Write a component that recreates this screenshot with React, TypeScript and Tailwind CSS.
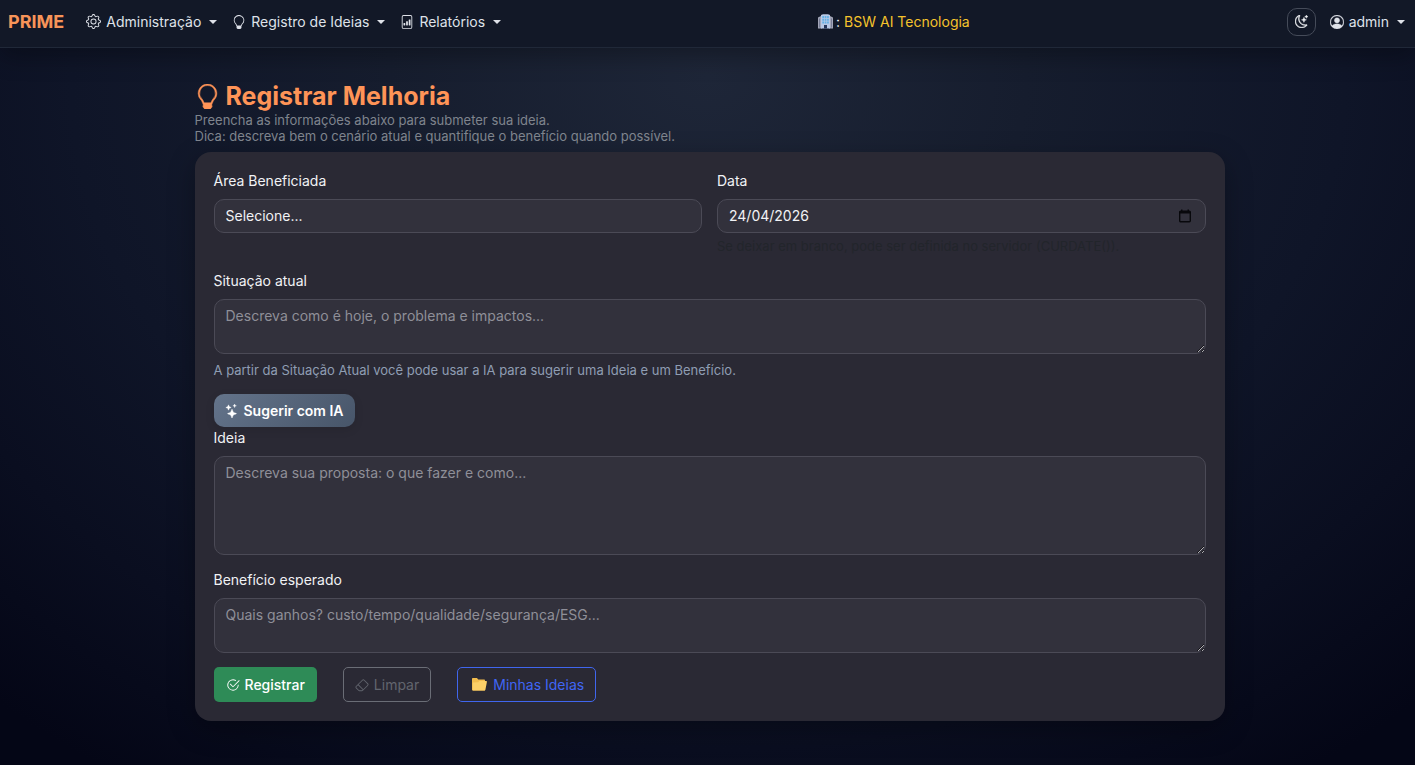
import { useState } from "react";
import type { ReactNode } from "react";
import {
  BsCheck2Circle,
  BsEraser,
  BsFileBarGraph,
  BsGear,
  BsLightbulb,
  BsMoonStars,
  BsPersonCircle,
  BsStars,
} from "react-icons/bs";

const fieldClass =
  "block w-full rounded-[10px] border border-[#4b4a56] bg-[#32313c] px-[11px] text-[14px] leading-[22px] text-[#f1f2f5] placeholder-[#8f8f98] outline-none focus:border-[#6b7a99]";
const labelClass = "mb-[7px] block text-[14px] leading-[22px] text-[#f1f2f5]";

function Caret() {
  return (
    <span className="ml-2 h-0 w-0 border-x-4 border-t-4 border-x-transparent border-t-current" />
  );
}

function NavItem({ icon, label }: { icon: ReactNode; label: string }) {
  return (
    <button type="button" className="flex items-center text-[14px] leading-[22px] text-[#dfe2e9]">
      {icon}
      <span className="ml-[5px]">{label}</span>
      <Caret />
    </button>
  );
}

function BuildingIcon() {
  return (
    <svg width="15" height="15" viewBox="0 0 15 15" aria-hidden="true">
      <path d="M0 3.500l4-2v13H0zM15 3.500l-4-2v13h4z" fill="#a3a6b8" />
      <path d="M3 1l2-.7h5l2 .7v13.500H3z" fill="#b9c9e6" />
      <path
        d="M4.300 2h1.700v2H4.300zM6.700 2h1.700v2H6.700zM9.100 2h1.700v2H9.100zM4.300 4.700h1.700v2H4.300zM6.700 4.700h1.700v2H6.700zM9.100 4.700h1.700v2H9.100zM4.300 7.400h1.700v2H4.300zM6.700 7.400h1.700v2H6.700zM9.100 7.400h1.700v2H9.100z"
        fill="#62b0e4"
      />
      <path d="M1 4.500h1v9H1zM13 4.500h1v9h-1z" fill="#777d96" />
      <path d="M6 11h3v3.500H6z" fill="#26375c" />
    </svg>
  );
}

function FolderIcon() {
  return (
    <svg width="15" height="13" viewBox="0 0 15 13" aria-hidden="true">
      <path d="M0 1c0-.6.4-1 1-1h4l1.200 1.500H12c.6 0 1 .4 1 1V12.500H.8c-.5 0-.8-.3-.8-.8z" fill="#f2bd4e" />
      <path d="M.8 4.600l5.400-.4 1-1.200H14c.6 0 1 .4.900 1l-1.500 7.700c-.1.500-.5.800-1 .8H.8z" fill="#fcd068" />
    </svg>
  );
}

function CalendarIcon() {
  return (
    <svg width="14" height="14" viewBox="0 0 14 14" aria-hidden="true">
      <rect x="1.700" y="2.200" width="10.600" height="10.600" rx="1" fill="none" stroke="#08080c" strokeWidth="1.400" />
      <path d="M1.700 2h10.600v2.600H1.700zM3 .5h1.500V3H3zM9.500.5H11V3H9.500z" fill="#08080c" />
    </svg>
  );
}

export default function App() {
  const [date, setDate] = useState("24/04/2026");

  return (
    <div className="flex min-h-screen flex-col bg-[radial-gradient(ellipse_75%_110%_at_50%_10%,#1e2638_0%,#161d2e_30%,#0f1528_60%,#0a0e20_80%,#040616_100%)] font-['Inter','Liberation_Sans',sans-serif] text-[#f1f2f5]">
      <header className="flex h-12 items-center border-b border-[#202838] bg-[#121827] pr-[10px] pl-2 pb-1 shadow-[0_8px_24px_rgba(0,0,0,0.3)]">
        <a href="#inicio" className="text-[18px] leading-7 font-bold text-[#f79459]">
          PRIME
        </a>
        <nav className="ml-[22px] flex items-center gap-[15px]">
          <NavItem icon={<BsGear size={15} />} label="Administração" />
          <NavItem icon={<BsLightbulb size={14} />} label="Registro de Ideias" />
          <NavItem icon={<BsFileBarGraph size={14} />} label="Relatórios" />
        </nav>
        <div className="mx-auto flex items-center text-[14px] leading-[22px]">
          <BuildingIcon />
          <span className="ml-[3px]">:</span>
          <span className="ml-1 text-[#f5c32c]">BSW AI Tecnologia</span>
        </div>
        <div className="flex items-center gap-[14px]">
          <button
            type="button"
            aria-label="Alternar tema"
            className="flex h-7 w-[29px] items-center justify-center rounded-[10px] border border-[#454b59] text-[#f1f2f5]"
          >
            <BsMoonStars size={13} strokeWidth={0.5} />
          </button>
          <NavItem icon={<BsPersonCircle size={14} strokeWidth={0.3} />} label="admin" />
        </div>
      </header>

      <main className="mx-auto w-full max-w-[1034px] pt-[33px] pb-11 pl-1">
        <h1 className="flex items-center text-[25px] leading-[31px] font-bold text-[#ff9457]">
          <BsLightbulb size={25} strokeWidth={0.3} />
          <span className="ml-[6px]">Registrar Melhoria</span>
        </h1>
        <p className="text-[13px] leading-4 text-[#7f848d]">
          Preencha as informações abaixo para submeter sua ideia.
          <br />
          Dica: descreva bem o cenário atual e quantifique o benefício quando possível.
        </p>

        <form
          className="mt-2 rounded-2xl bg-[#2a2934] px-[19px] pt-[18px] pb-[19px] shadow-[0_8px_28px_rgba(0,0,0,0.3)]"
          onSubmit={(event) => event.preventDefault()}
        >
          <div className="grid grid-cols-2 gap-[15px]">
            <div>
              <label htmlFor="area" className={labelClass}>
                Área Beneficiada
              </label>
              <select id="area" className={`${fieldClass} h-[34px] appearance-none`}>
                <option>Selecione...</option>
              </select>
            </div>
            <div>
              <label htmlFor="data" className={labelClass}>
                Data
              </label>
              <div className="flex h-[34px] items-center rounded-[10px] border border-[#4b4a56] bg-[#32313c] pr-[13px] pl-[11px]">
                <input
                  id="data"
                  type="text"
                  value={date}
                  onChange={(event) => setDate(event.target.value)}
                  className="min-w-0 flex-1 bg-transparent text-[14px] leading-[22px] text-[#f1f2f5] outline-none"
                />
                <button type="button" aria-label="Abrir calendário">
                  <CalendarIcon />
                </button>
              </div>
              <p className="mt-1 text-[13px] leading-[18px] text-[#22252b]">
                Se deixar em branco, pode ser definida no servidor (CURDATE()).
              </p>
            </div>
          </div>

          <div className="mt-[15px]">
            <label htmlFor="situacao" className={labelClass}>
              Situação atual
            </label>
            <textarea
              id="situacao"
              placeholder="Descreva como é hoje, o problema e impactos..."
              className={`${fieldClass} h-[55px] resize-y py-[5px]`}
            />
            <p className="mt-[7px] text-[13px] leading-[18px] text-[#8f9db3]">
              A partir da Situação Atual você pode usar a IA para sugerir uma Ideia e um Benefício.
            </p>
          </div>

          <button
            type="button"
            className="mt-[15px] flex h-[33px] items-center rounded-[10px] bg-linear-135 from-[#64748b] to-[#475569] px-[11px] text-[14px] leading-[22px] font-semibold text-white shadow-[0_3px_10px_rgba(0,0,0,0.1)]"
          >
            <BsStars size={14} strokeWidth={0.4} />
            <span className="ml-[5px]">Sugerir com IA</span>
          </button>

          <div>
            <label htmlFor="ideia" className={labelClass}>
              Ideia
            </label>
            <textarea
              id="ideia"
              placeholder="Descreva sua proposta: o que fazer e como..."
              className={`${fieldClass} h-[99px] resize-y py-[5px]`}
            />
          </div>

          <div className="mt-[14px]">
            <label htmlFor="beneficio" className={labelClass}>
              Benefício esperado
            </label>
            <textarea
              id="beneficio"
              placeholder="Quais ganhos? custo/tempo/qualidade/segurança/ESG..."
              className={`${fieldClass} h-[55px] resize-y py-[5px]`}
            />
          </div>

          <div className="mt-[14px] flex items-center gap-[26px] text-[14px] leading-[22px]">
            <button
              type="submit"
              className="flex h-[35px] items-center rounded-[5px] bg-[#2e8b57] px-3 font-medium text-white"
            >
              <BsCheck2Circle size={14} />
              <span className="ml-[5px]">Registrar</span>
            </button>
            <button
              type="reset"
              className="flex h-[35px] items-center rounded-[5px] border border-[#6a6d76] px-[11px] text-[#62656e]"
            >
              <BsEraser size={14} />
              <span className="ml-[5px]">Limpar</span>
            </button>
            <a
              href="#minhas-ideias"
              className="flex h-[35px] items-center rounded-[5px] border border-[#4066ee] px-[11px] text-[#4066f5]"
            >
              <span className="ml-[3px]">
                <FolderIcon />
              </span>
              <span className="ml-[6px]">Minhas Ideias</span>
            </a>
          </div>
        </form>
      </main>
    </div>
  );
}
